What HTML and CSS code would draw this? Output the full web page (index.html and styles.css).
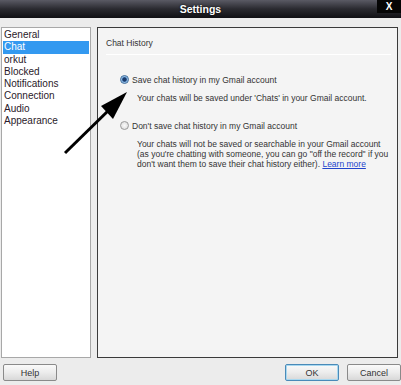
FILE: index.html
```html
<!DOCTYPE html>
<html lang="en">
<head>
    <meta charset="UTF-8">
    <title>Settings</title>
    <link rel="stylesheet" href="styles.css">
</head>
<body>
    <div class="window">
        <!-- Title bar -->
        <div class="titlebar">
            <span class="title">Settings</span>
            <span class="close">X</span>
        </div>

        <div class="main">
            <!-- Category list -->
            <ul class="categories">
                <li>General</li>
                <li class="selected">Chat</li>
                <li>orkut</li>
                <li>Blocked</li>
                <li>Notifications</li>
                <li>Connection</li>
                <li>Audio</li>
                <li>Appearance</li>
            </ul>

            <!-- Chat panel -->
            <div class="panel">
                <div class="panel-title">Chat History</div>
                <div class="separator"></div>

                <div class="option">
                    <div class="option-label"><span class="radio checked"></span>Save chat history in my Gmail account</div>
                    <p class="option-desc">Your chats will be saved under 'Chats' in your Gmail account.</p>
                </div>

                <div class="option second">
                    <div class="option-label"><span class="radio"></span>Don't save chat history in my Gmail account</div>
                    <p class="option-desc">Your chats will not be saved or searchable in your Gmail account<br>(as you're chatting with someone, you can go "off the record" if you<br>don't want them to save their chat history either). <a href="#">Learn more</a></p>
                </div>
            </div>
        </div>

        <div class="buttons">
            <button class="btn">Help</button>
            <div class="spacer"></div>
            <button class="btn default">OK</button>
            <button class="btn">Cancel</button>
        </div>

        <!-- Pointer arrow drawn over the dialog -->
        <svg class="arrow" width="401" height="385" viewBox="0 0 401 385">
            <line x1="65" y1="153" x2="112" y2="107" stroke="#000" stroke-width="3"/>
            <polygon points="127,92 101,106 113,119" fill="#000"/>
        </svg>
    </div>
</body>
</html>
```

FILE: styles.css
```css
* {
    margin: 0;
    padding: 0;
    box-sizing: border-box;
}
body {
    width: 401px;
    height: 385px;
    overflow: hidden;
    background-color: #ececec;
    font-family: 'Liberation Sans', Arial, sans-serif;
    color: #222;
}
.window {
    position: relative;
    width: 401px;
    height: 385px;
}

/* Title bar */
.titlebar {
    height: 18px;
    background: linear-gradient(#5a5a64, #2a2a30 50%, #101014);
    display: flex;
    align-items: center;
    justify-content: center;
    position: relative;
}
.title {
    color: #fff;
    font-weight: bold;
    font-size: 10.5px;
    text-shadow: 0 0 2px #000;
}
.close {
    position: absolute;
    top: 0;
    right: 0;
    width: 24px;
    height: 13px;
    background-color: #050505;
    color: #fff;
    font-weight: bold;
    font-size: 10px;
    line-height: 13px;
    text-align: center;
}

.main {
    display: flex;
    gap: 6px;
    padding: 9px 3px 0 1px;
    height: 340px;
}

/* Left list */
.categories {
    list-style: none;
    width: 90px;
    height: 331px;
    background-color: #fff;
    border: 1px solid #a8a8a8;
    padding: 1px 1px;
    font-size: 10px;
    color: #2a1a2a;
}
.categories li {
    height: 12.3px;
    line-height: 12.3px;
    padding-left: 1px;
}
.categories li.selected {
    background-color: #3399f0;
    color: #fff;
}

/* Right panel */
.panel {
    flex: 1;
    height: 331px;
    background-color: #f4f4f4;
    border: 1px solid #3a3a3a;
    padding: 0 6px 0 8px;
    font-size: 8.5px;
    color: #333;
}
.panel-title {
    margin-top: 10px;
    height: 11px;
    line-height: 11px;
}
.separator {
    height: 1px;
    background-color: #c8c8c8;
    border-bottom: 1px solid #fff;
    margin-top: 5px;
}
.option {
    margin-top: 19px;
    padding-left: 14px;
}
.option.second {
    margin-top: 17px;
}
.option-label {
    display: flex;
    align-items: center;
    gap: 3px;
    height: 11px;
}
.option-desc {
    margin-top: 8px;
    padding-left: 17px;
    line-height: 10px;
    white-space: nowrap;
}
.option-desc a {
    color: #2244cc;
}
.radio {
    width: 9px;
    height: 9px;
    border-radius: 50%;
    border: 1px solid #9a9a9a;
    background: radial-gradient(#fafafa, #d8d8d8);
}
.radio.checked {
    border-color: #3a6a9a;
    background: radial-gradient(circle, #1a3a6a 0 1.8px, #6aa0d8 2.5px, #d8ecfa 4px);
}

/* Bottom buttons */
.buttons {
    display: flex;
    gap: 8px;
    padding: 6px 0 0 3px;
}
.spacer {
    flex: 1;
}
.btn {
    width: 54px;
    height: 17px;
    font-family: 'Liberation Sans', Arial, sans-serif;
    font-size: 9px;
    color: #333;
    border: 1px solid #8a8a8a;
    border-radius: 2px;
    background: linear-gradient(#fafafa, #ececec 50%, #d8d8d8);
}
.btn.default {
    border-color: #4a8ab8;
    box-shadow: inset 0 0 0 1px #a8d8f0;
}

.arrow {
    position: absolute;
    top: 0;
    left: 0;
    pointer-events: none;
}
```
